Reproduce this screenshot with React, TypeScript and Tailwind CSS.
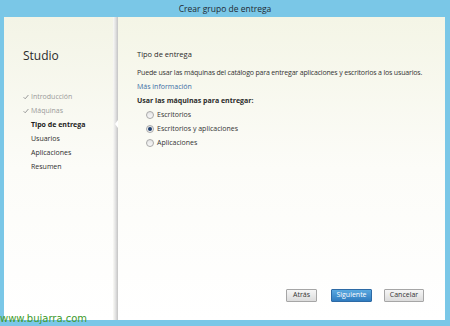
import React from "react";

const steps = [
  { label: "Introducción", state: "done" },
  { label: "Máquinas", state: "done" },
  { label: "Tipo de entrega", state: "current" },
  { label: "Usuarios", state: "todo" },
  { label: "Aplicaciones", state: "todo" },
  { label: "Resumen", state: "todo" },
];

const options = ["Escritorios", "Escritorios y aplicaciones", "Aplicaciones"];

function Check() {
  return (
    <svg width="6" height="6" viewBox="0 0 6 6" className="mr-[2px]">
      <path d="M0.6 3.2 L2.2 4.8 L5.4 1" fill="none" stroke="#9a9a9a" strokeWidth="1" />
    </svg>
  );
}

function Radio({ checked }: { checked: boolean }) {
  return (
    <span className="w-[8px] h-[8px] rounded-full border border-[#a9a9a9] bg-gradient-to-b from-[#e4e4e4] to-[#f8f8f8] flex items-center justify-center mr-[3px]">
      {checked && <span className="w-[4px] h-[4px] rounded-full bg-[#1e3f6e]" />}
    </span>
  );
}

export default function App() {
  return (
    <div
      className="relative w-[450px] h-[326px] bg-[#7ac7e7] flex flex-col overflow-hidden text-[#333]"
      style={{ fontFamily: '"Open Sans", "Noto Sans", sans-serif' }}
    >
      {/* title bar */}
      <div className="h-[17px] leading-[17px] text-center text-[8.5px] text-[#1f2a33]">
        Crear grupo de entrega
      </div>

      <div className="flex ml-[4px] mr-[5px] h-[303px]">
        {/* sidebar */}
        <div className="shrink-0 w-[109px] bg-gradient-to-b from-[#f3f4e6] via-[#fcfcf8] to-white pt-[32px] pl-[19px]">
          <div className="h-[14px] leading-[14px] text-[12px] text-[#2b2b2b]">Studio</div>
          <div className="mt-[27px] flex flex-col">
            {steps.map((s) => (
              <div
                key={s.label}
                className={
                  "h-[14px] leading-[14px] text-[7px] flex items-center " +
                  (s.state === "done"
                    ? "text-[#9a9a9a]"
                    : s.state === "current"
                    ? "text-[#1d1d1d] font-bold pl-[8px]"
                    : "text-[#2e2e2e] pl-[8px]")
                }
              >
                {s.state === "done" && <Check />}
                {s.label}
              </div>
            ))}
          </div>
        </div>

        {/* divider shadow */}
        <div className="relative shrink-0 w-[5px] bg-gradient-to-r from-[#fafaf6] via-[#e2e2e2] to-[#c4c4c4]">
          <span className="absolute right-0 top-[103px] w-0 h-0 border-y-[4px] border-y-transparent border-r-[3px] border-r-white" />
        </div>

        {/* main */}
        <div className="flex-1 min-w-0 flex flex-col bg-gradient-to-b from-[#f4f5e6] via-[#fcfcf8] to-white pl-[19px] pr-[21px] pt-[30px] pb-[18px]">
          <div className="h-[14px] leading-[14px] text-[7.5px] text-[#2a2a2a]">Tipo de entrega</div>
          <div className="mt-[5px] h-[14px] leading-[14px] text-[7px] tracking-[-0.17px] whitespace-nowrap">
            Puede usar las máquinas del catálogo para entregar aplicaciones y escritorios a los usuarios.
          </div>
          <div className="h-[14px] leading-[14px] text-[7px] text-[#3a6ea5]">Más información</div>
          <div className="h-[14px] leading-[14px] text-[7px] font-bold text-[#2a2a2a]">
            Usar las máquinas para entregar:
          </div>
          <div className="flex flex-col pl-[9px]">
            {options.map((o, i) => (
              <div key={o} className="h-[14px] flex items-center text-[7px]">
                <Radio checked={i === 1} />
                {o}
              </div>
            ))}
          </div>

          <div className="mt-auto flex justify-end items-center text-[7px]">
            <button className="w-[31px] h-[13px] border border-[#a6a6a6] rounded-[1px] bg-gradient-to-b from-[#f6f6f6] to-[#dcdcdc] text-[#333]">
              Atrás
            </button>
            <button className="ml-[14px] w-[41px] h-[13px] border border-[#2d6aa5] rounded-[1px] bg-gradient-to-b from-[#5aa9e0] to-[#2f7cc0] text-white">
              Siguiente
            </button>
            <button className="ml-[12px] w-[40px] h-[13px] border border-[#a6a6a6] rounded-[1px] bg-gradient-to-b from-[#f6f6f6] to-[#dcdcdc] text-[#333]">
              Cancelar
            </button>
          </div>
        </div>
      </div>

      {/* watermark */}
      <div
        className="absolute left-0 top-[313px] text-[10px] leading-[11px] text-[#3d9a2b]"
        style={{ fontFamily: '"DejaVu Sans", sans-serif' }}
      >
        www.bujarra.com
      </div>
    </div>
  );
}
